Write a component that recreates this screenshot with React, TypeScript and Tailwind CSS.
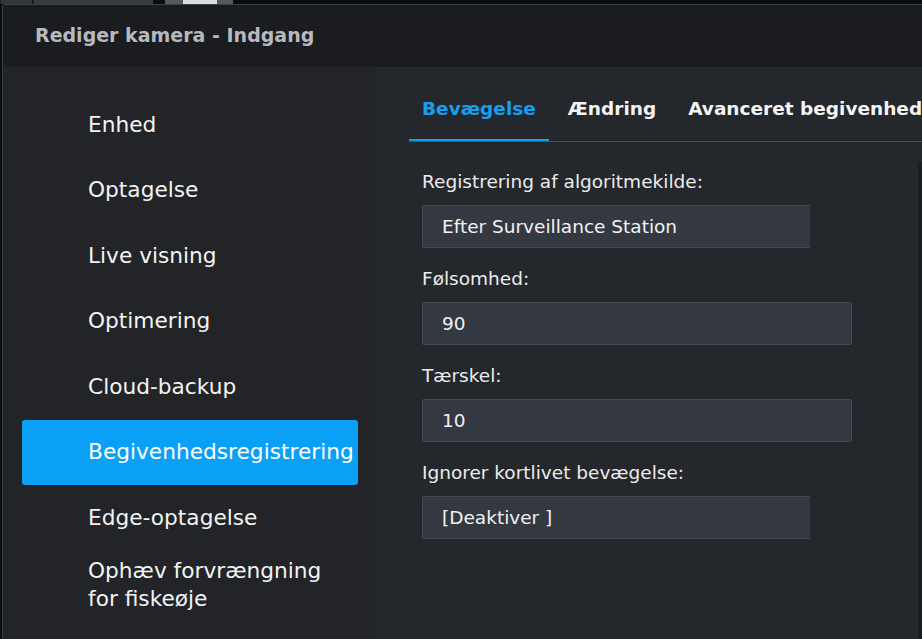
import React from "react";

const navItems = [
  "Enhed",
  "Optagelse",
  "Live visning",
  "Optimering",
  "Cloud-backup",
  "Begivenhedsregistrering",
  "Edge-optagelse",
];

const font = { fontFamily: '"DejaVu Sans", Verdana, sans-serif' };

function Field({ label, value, select }: { label: string; value: string; select?: boolean }) {
  return (
    <div className="flex flex-col">
      <div className="h-[22px] leading-[22px] text-[18.5px] text-[#ececec] whitespace-nowrap">{label}</div>
      <div
        className={
          "mt-[12px] h-[43px] flex items-center pl-[19px] bg-[#343941] border border-[#454a51] text-[18.5px] text-[#f2f2f2] whitespace-nowrap " +
          (select ? "w-[388px] border-r-0 rounded-l-[2px]" : "w-[430px] rounded-[2px]")
        }
      >
        {value}
      </div>
    </div>
  );
}

export default function App() {
  return (
    <div className="w-[922px] h-[639px] overflow-hidden bg-[#0b0c0e] flex flex-col" style={font}>
      {/* top strip */}
      <div className="h-[4px] flex shrink-0">
        <div className="w-[1px] bg-[#1e2125]" />
        <div className="w-[31px] bg-[#33373d]" />
        <div className="w-[2px] bg-[#1a1c1f]" />
        <div className="w-[119px] bg-[#363b41]" />
        <div className="w-[12px]" />
        <div className="w-[18px] bg-[#55595e]" />
        <div className="w-[34px] bg-[#dcdde0]" />
        <div className="w-[16px] bg-[#55595e]" />
      </div>
      {/* dialog */}
      <div className="flex-1 ml-[2px] border-l border-t border-[#3b3e43] rounded-tl-[3px] flex flex-col overflow-hidden">
        <div className="h-[62px] shrink-0 bg-[#1a1c20] flex items-center pl-[32px] pb-[1px]">
          <span className="text-[19px] font-bold text-[#b6b9be] whitespace-nowrap">Rediger kamera - Indgang</span>
        </div>
        <div className="flex-1 flex min-h-0">
          {/* sidebar */}
          <div className="w-[374px] shrink-0 bg-[#222428] pt-[25px] px-[19px]">
            {navItems.map((item) => {
              const active = item === "Begivenhedsregistrering";
              return (
                <div
                  key={item}
                  className={
                    "h-[65.5px] flex items-center pl-[66px] pt-[1px] text-[21.7px] whitespace-nowrap rounded-[3px] " +
                    (active ? "bg-[#09a0f6] text-white" : "text-[#f3f3f3]")
                  }
                >
                  {item}
                </div>
              );
            })}
            <div className="pt-[6.5px] pl-[66px] text-[21.7px] leading-[28px] text-[#f3f3f3]">
              Ophæv forvrængning
              <br />
              for fiskeøje
            </div>
          </div>
          {/* content */}
          <div className="flex-1 bg-[#24272b] flex flex-col min-w-0">
            <div className="ml-[32px] pt-[31px] flex gap-[6px] border-b border-[#4a4e54] whitespace-nowrap overflow-hidden">
              <div className="px-[13px] pb-[19px] -mb-px border-b-[3px] border-[#0aa2f5] text-[18.5px] leading-[22px] font-bold text-[#159ff0]">
                Bevægelse
              </div>
              <div className="px-[13px] pb-[19px] -mb-px border-b-[3px] border-transparent text-[18.5px] leading-[22px] font-bold text-[#f4f4f4]">
                Ændring
              </div>
              <div className="px-[13px] pb-[19px] -mb-px border-b-[3px] border-transparent text-[18.5px] leading-[22px] font-bold text-[#f4f4f4]">
                Avanceret begivenhedsregistrering
              </div>
            </div>
            <div className="flex-1 flex min-h-0">
              <div className="flex-1 pl-[45px] pt-[29px] flex flex-col gap-[20px]">
                <Field label="Registrering af algoritmekilde:" value="Efter Surveillance Station" select />
                <Field label="Følsomhed:" value="90" />
                <Field label="Tærskel:" value="10" />
                <Field label="Ignorer kortlivet bevægelse:" value="[Deaktiver ]" select />
              </div>
              <div className="w-[4px] mt-[20px] bg-[#1b1d21]" />
            </div>
          </div>
        </div>
      </div>
    </div>
  );
}
